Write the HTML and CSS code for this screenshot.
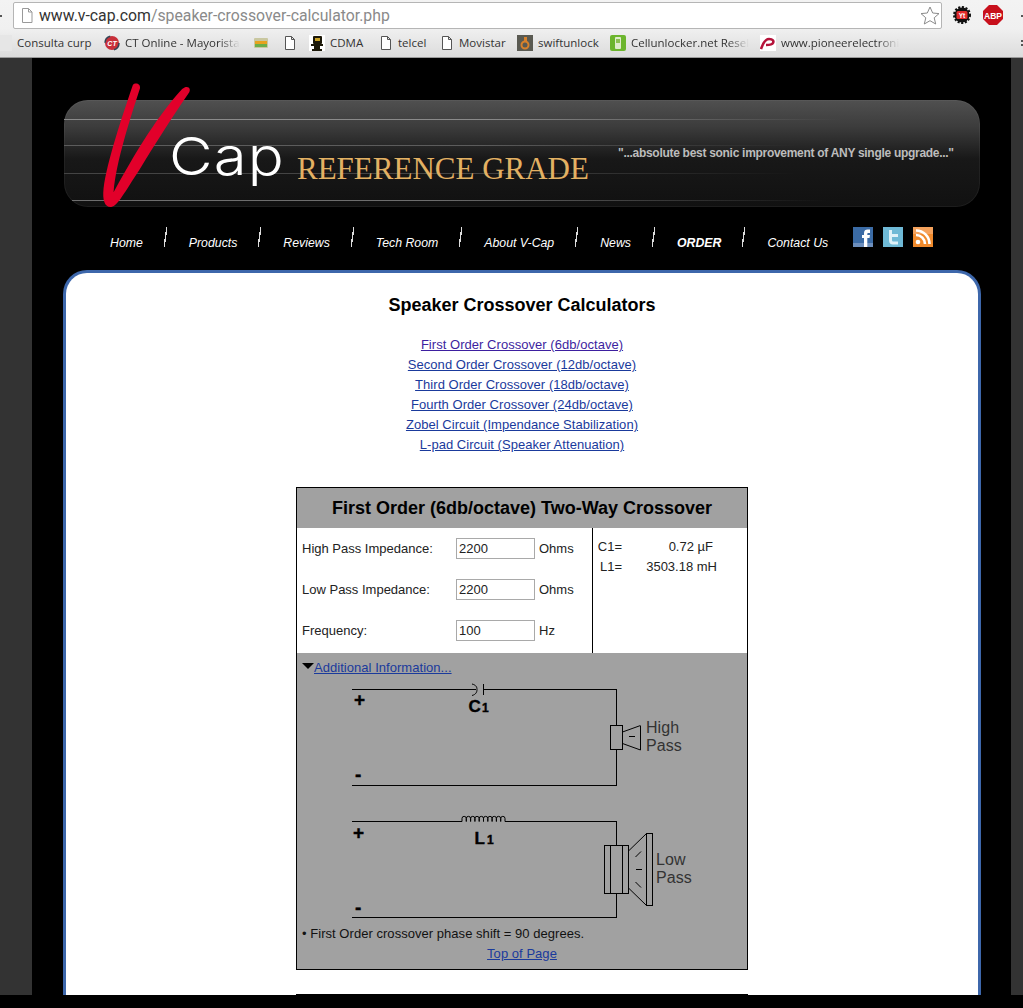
FILE: index.html
```html
<!DOCTYPE html>
<html lang="en">
<head>
<meta charset="utf-8">
<title>Speaker Crossover Calculators</title>
<link rel="stylesheet" href="styles.css">
</head>
<body>
<div class="chrome">
  <i class="dot d1"></i><i class="dot d2"></i><i class="dot d3"></i><i class="dot d4"></i>
  <div class="addr-row">
    <div class="omnibox">
      <svg class="page-ic" width="12" height="15" viewBox="0 0 12 15"><path d="M1.500.5h6l3.500 3.500v10.500h-9.500z M7.500.5v3.500h3.500" fill="#fff" stroke="#999"/></svg>
      <span class="url"><span class="host">www.v-cap.com</span>/speaker-crossover-calculator.php</span>
      <svg class="star" width="20" height="19" viewBox="0 0 20 19"><path d="M10 1l2.700 6 6.300.6-4.800 4.200 1.500 6.200-5.700-3.300-5.700 3.300 1.500-6.200L1 7.600l6.300-.6z" fill="#fff" stroke="#8a8a8a"/></svg>
    </div>
    <div class="ext-icons">
      <svg width="20" height="20" viewBox="0 0 20 20"><circle cx="10" cy="10" r="7.500" fill="#111" stroke="#111" stroke-width="3" stroke-dasharray="2 1.500"/><rect x="4.500" y="6" width="11" height="8" rx="1.500" fill="#e02b2b"/><text x="10" y="12.500" class="yt">Yt</text></svg>
      <svg width="20" height="20" viewBox="0 0 20 20"><path d="M6 0h8l6 6v8l-6 6H6l-6-6V6z" fill="#c8101c"/><text x="10" y="13.500" class="abp">ABP</text></svg>
    </div>
  </div>
  <div class="bm-row">
    <span class="bm b1"><i class="fav"></i>Consulta curp</span>
    <span class="bm b2"><svg width="16" height="16" viewBox="0 0 16 16"><circle cx="8" cy="8" r="7" fill="#c8303a"/><circle cx="8" cy="8" r="7" fill="none" stroke="#345" stroke-width="1.500" stroke-dasharray="9 13"/><text x="8" y="11" class="ct">CT</text></svg><span class="fade">CT Online - Mayorista</span></span>
    <span class="bm b3"><svg width="16" height="14" viewBox="0 0 16 14"><rect x="1" y="2" width="14" height="10" rx="1" fill="#c9c7a0"/><rect x="2" y="5" width="12" height="3" fill="#e8a21e"/><rect x="2" y="8" width="12" height="3" fill="#6cae4a"/></svg></span>
    <span class="bm b4"><svg class="doc" width="12" height="14" viewBox="0 0 12 14"><path d="M1.500.5h6l3 3v10h-9z M7.500.5v3h3" fill="#fff" stroke="#555"/></svg></span>
    <span class="bm b5"><svg width="16" height="16" viewBox="0 0 16 16"><rect width="16" height="16" fill="#fff"/><rect x="4" y="1" width="9" height="8" rx="1" fill="#1c1808"/><rect x="6" y="3" width="5" height="3" fill="#c9a227"/><path d="M2 9h12v2H2zM5 11h6v3h2v2H3v-2h2z" fill="#1c1808"/></svg>CDMA</span>
    <span class="bm b6"><svg class="doc" width="12" height="14" viewBox="0 0 12 14"><path d="M1.500.5h6l3 3v10h-9z M7.500.5v3h3" fill="#fff" stroke="#555"/></svg>telcel</span>
    <span class="bm b7"><svg class="doc" width="12" height="14" viewBox="0 0 12 14"><path d="M1.500.5h6l3 3v10h-9z M7.500.5v3h3" fill="#fff" stroke="#555"/></svg>Movistar</span>
    <span class="bm b8"><svg width="16" height="16" viewBox="0 0 16 16"><rect width="16" height="16" fill="#5a5a52"/><circle cx="8" cy="10" r="3.500" fill="none" stroke="#d9822b" stroke-width="2"/><rect x="7" y="2" width="3" height="5" fill="#d9822b"/></svg>swiftunlock</span>
    <span class="bm b9"><svg width="16" height="16" viewBox="0 0 16 16"><rect width="16" height="16" rx="2" fill="#6cb52d"/><rect x="5" y="2" width="6" height="12" rx="1" fill="#dfeccb"/><rect x="6" y="4" width="4" height="4" fill="#8cc152"/></svg><span class="fade">Cellunlocker.net Resel</span></span>
    <span class="bm"><svg width="16" height="16" viewBox="0 0 16 16"><rect width="16" height="16" fill="#fff"/><path d="M1 14C3 8 5 4 9 4c4 0 5 2 4 4-1 2-4 2-7 2" fill="none" stroke="#b5123a" stroke-width="2.600"/></svg><span class="fade">www.pioneerelectroni</span></span>
  </div>
</div>
<div class="page">
  <div class="gutter-l"></div>
  <main class="wrap">
    <header class="banner">
      <div class="banner-bar">
        <span class="line l1"></span><span class="line l2"></span><span class="line l3"></span><span class="line l4"></span>
        <svg class="v-mark" width="95" height="128" viewBox="140 18 266 384" preserveAspectRatio="none"><path d="M232 30C200 130 160 260 150 340C146 380 155 398 172 396C190 392 210 350 250 285C290 215 340 130 388 55C398 40 385 28 370 42C320 100 260 190 178 352C185 260 225 130 252 40C254 25 238 22 232 30Z" fill="#e2002a"/></svg>
        <span class="cap">Cap</span>
        <span class="grade">REFERENCE GRADE</span>
        <span class="quote">"...absolute best sonic improvement of ANY single upgrade..."</span>
      </div>
    </header>
    <nav class="nav">
      <a class="nav-i">Home</a><i class="sep"></i>
      <a class="nav-i">Products</a><i class="sep"></i>
      <a class="nav-i">Reviews</a><i class="sep"></i>
      <a class="nav-i">Tech Room</a><i class="sep"></i>
      <a class="nav-i">About V-Cap</a><i class="sep"></i>
      <a class="nav-i">News</a><i class="sep"></i>
      <a class="nav-i nav-b">ORDER</a><i class="sep"></i>
      <a class="nav-i">Contact Us</a>
      <span class="social">
        <svg width="20" height="20" viewBox="0 0 20 20"><rect width="20" height="20" fill="#3b6ba5"/><rect y="16" width="20" height="4" fill="#6d8fbd"/><path d="M11 20v-9H9V8h2V6c0-2.500 1.500-3.500 3.500-3.500H17V6h-1.500c-1 0-1.200.5-1.200 1.200V8H17l-.5 3h-2.200v9z" fill="#fff"/></svg>
        <svg width="20" height="20" viewBox="0 0 20 20"><rect width="20" height="20" fill="#6fb9d6"/><path d="M6 3h3v4h6v3H9v3c0 1 .6 1.500 1.600 1.500H15v3h-5c-2.500 0-4-1.500-4-4z" fill="#dff1f8"/></svg>
        <svg width="20" height="20" viewBox="0 0 20 20"><rect width="20" height="20" fill="#f08a2c"/><rect width="20" height="7" fill="#f5a25c"/><circle cx="5" cy="15" r="2.300" fill="#fff"/><path d="M3 8a9 9 0 0 1 9 9M3 3.500a13.500 13.500 0 0 1 13.500 13.500" fill="none" stroke="#fff" stroke-width="2.600"/></svg>
      </span>
    </nav>
    <section class="card">
      <h1 class="title">Speaker Crossover Calculators</h1>
      <ul class="links">
        <li><a class="lnk visited" href="#a">First Order Crossover (6db/octave)</a></li>
        <li><a class="lnk" href="#b">Second Order Crossover (12db/octave)</a></li>
        <li><a class="lnk" href="#c">Third Order Crossover (18db/octave)</a></li>
        <li><a class="lnk" href="#d">Fourth Order Crossover (24db/octave)</a></li>
        <li><a class="lnk" href="#e">Zobel Circuit (Impendance Stabilization)</a></li>
        <li><a class="lnk" href="#f">L-pad Circuit (Speaker Attenuation)</a></li>
      </ul>
      <div class="calc">
        <h2 class="calc-h">First Order (6db/octave) Two-Way Crossover</h2>
        <div class="calc-body">
          <div class="inputs">
            <label class="f-row"><span class="f-lab">High Pass Impedance:</span><input class="f-in" value="2200"><span>Ohms</span></label>
            <label class="f-row"><span class="f-lab">Low Pass Impedance:</span><input class="f-in" value="2200"><span>Ohms</span></label>
            <label class="f-row"><span class="f-lab">Frequency:</span><input class="f-in" value="100"><span>Hz</span></label>
          </div>
          <div class="results">
            <div class="r-row"><span class="r-k">C1=</span><span class="r-v r-v-c">0.72 µF</span></div>
            <div class="r-row"><span class="r-k">L1=</span><span class="r-v">3503.18 mH</span></div>
          </div>
        </div>
        <div class="info">
          <div class="more"><i class="tri"></i><a class="lnk" href="#i">Additional Information...</a></div>
          <svg class="schem" width="400" height="252" viewBox="0 0 400 252">
            <g fill="none" stroke="#000" stroke-width="1" shape-rendering="crispEdges">
              <path d="M12 19.500H136M143 19.500H276.500V55M276.500 79V115.500H12"/>
              <path d="M143.500 14v11"/>
              <path d="M270.500 55.500h12v24h-12z"/>
              <path d="M300.500 55.500v24"/>
              <path d="M12 151.500H122M165 151.500H276.500V175M276.500 224V247.500H12"/>
              <path d="M264.500 175.500h24v48h-24zM270.500 175.500v48M282.500 175.500v48"/>
              <path d="M306.500 163.500h6v72h-6z"/>
              <path d="M295.500 199.500h6M288.500 66.500h6"/>
            </g>
            <g fill="none" stroke="#000" stroke-width="1">
              <path d="M132 14c4 1 5 3 5 5.500s-1 5-5 6"/>
              <path d="M122 151.500v-3a2.150 2.150 0 0 1 4.300 0v3-3a2.150 2.150 0 0 1 4.300 0v3-3a2.150 2.150 0 0 1 4.300 0v3-3a2.150 2.150 0 0 1 4.300 0v3-3a2.150 2.150 0 0 1 4.300 0v3-3a2.150 2.150 0 0 1 4.300 0v3-3a2.150 2.150 0 0 1 4.300 0v3-3a2.150 2.150 0 0 1 4.300 0v3-3a2.150 2.150 0 0 1 4.300 0v3-3a2.150 2.150 0 0 1 4.300 0v3"/>
              <path d="M282.500 62l18-6.500M282.500 73.500l18 6.500"/>
              <path d="M288.500 181l18-17.500M288.500 218l18 17.500"/>
              <path d="M295.500 187l5.500-5.500M295.500 212l5.500 5.500"/>
            </g>
            <text x="14" y="36" class="s-bold s-pm">+</text>
            <text x="15" y="111" class="s-bold s-pm">-</text>
            <text x="13" y="169" class="s-bold s-pm">+</text>
            <text x="15" y="244" class="s-bold s-pm">-</text>
            <text x="128.500" y="42" class="s-bold s-lbl">C</text><text x="142" y="42" class="s-bold s-sub">1</text>
            <text x="134.500" y="174" class="s-bold s-lbl">L</text><text x="147" y="174" class="s-bold s-sub">1</text>
            <text x="306" y="63" class="s-txt">High</text>
            <text x="306" y="81" class="s-txt">Pass</text>
            <text x="316" y="195" class="s-txt">Low</text>
            <text x="316" y="213" class="s-txt">Pass</text>
          </svg>
          <p class="note">• First Order crossover phase shift = 90 degrees.</p>
          <p class="top"><a class="lnk" href="#top">Top of Page</a></p>
        </div>
      </div>
      <div class="calc-next"></div>
    </section>
  </main>
  <div class="gutter-r"></div>
</div>
<div class="bottom"></div>
</body>
</html>
```
FILE: styles.css
```css
* { box-sizing: border-box; }
html, body { margin: 0; padding: 0; height: 1008px; overflow: hidden; background: #000; }
body { font-family: "Liberation Sans", Arial, sans-serif; }

.chrome { position: relative; height: 58px; background: linear-gradient(#f3f3f3, #f0f0f0 50%, #dcdcdc); border-bottom: 1px solid #9a9a9a; overflow: hidden; font-family: "Open Sans", "Noto Sans", sans-serif; }
.dot { position: absolute; width: 2px; height: 2px; background: #555; }
.d1 { left: 0; top: 15px; }
.d2 { left: 1021px; top: 15px; }
.d3 { left: 1021px; top: 40px; }
.d4 { left: 1021px; top: 44px; }
.addr-row { height: 31px; display: flex; align-items: flex-start; padding: 2px 0 0 13px; }
.omnibox { width: 929px; height: 27px; background: #fff; border: 1px solid #b5b5b5; border-radius: 2px; display: flex; align-items: center; padding: 0 1px 0 7px; }
.page-ic { flex: none; }
.url { margin-left: 6px; font-family: "Roboto", "Open Sans", sans-serif; font-size: 15.800px; color: #8a8a8a; white-space: nowrap; flex: 1; }
.host { color: #333; }
.ext-icons { display: flex; gap: 11px; margin-left: 10px; margin-top: 3px; }
.yt { font: bold 6.500px "Liberation Sans", sans-serif; fill: #fff; text-anchor: middle; }
.abp { font: bold 8.500px "Liberation Sans", sans-serif; fill: #fff; text-anchor: middle; }
.ct { font: italic bold 7px "Liberation Sans", sans-serif; fill: #fff; text-anchor: middle; }

.bm-row { height: 26px; display: flex; align-items: center; font-size: 11.500px; color: #333; white-space: nowrap; padding-bottom: 3px; }
.bm { display: inline-flex; align-items: center; gap: 5px; flex: none; }
.b1 { width: 104px; }
.b2 { width: 149px; }
.b3 { width: 31px; }
.b4 { width: 25px; }
.b5 { width: 71px; }
.b6 { width: 61px; }
.b7 { width: 76px; }
.b8 { width: 93px; }
.b9 { width: 150px; }
.doc { margin-right: 1px; }
.fav { display: inline-block; width: 12px; height: 16px; background: #e6e6e6; flex: none; }
.fade { display: inline-block; -webkit-mask-image: linear-gradient(90deg, #000 82%, transparent); mask-image: linear-gradient(90deg, #000 82%, transparent); }

.page { height: 937px; display: flex; }
.gutter-l { width: 32px; flex: none; background: #333; }
.gutter-r { width: 12px; flex: none; background: #333; }
.wrap { width: 979px; flex: none; background: #000; }

.banner { height: 167px; padding: 42px 0 0 32px; }
.banner-bar { position: relative; width: 916px; height: 107px; border-radius: 24px; background: linear-gradient(#505050 0, #3c3c3c 25%, #181818 55%, #111 100%); box-shadow: inset 0 0 0 1px rgba(255,255,255,.05); }
.line { position: absolute; left: 0; height: 1px; }
.l1 { top: 19px; width: 100%; background: linear-gradient(90deg, #8a8a8a 45%, transparent 85%); }
.l2 { top: 45px; width: 100%; background: linear-gradient(90deg, #5c5c5c 45%, transparent 80%); }
.l3 { top: 73px; width: 100%; background: linear-gradient(90deg, #444 45%, transparent 80%); }
.l4 { top: 100px; left: 8px; width: 97%; background: linear-gradient(90deg, #6e6e6e 40%, transparent 85%); }
.v-mark { position: absolute; left: 36px; top: -19px; }
.cap { position: absolute; left: 105px; top: 27px; font-family: "Inter", "Lato", sans-serif; font-weight: 300; font-size: 52px; line-height: 60px; letter-spacing: 1px; color: #fff; transform: scaleX(1.15); transform-origin: left center; }
.grade { position: absolute; left: 233px; top: 51px; font-family: "Liberation Serif", serif; font-size: 31px; line-height: 36px; color: #e3b163; white-space: nowrap; }
.quote { position: absolute; left: 554px; top: 46px; font-weight: bold; font-size: 12px; letter-spacing: -.29px; line-height: 15px; color: #bcbcbc; white-space: nowrap; }

.nav { height: 45px; display: flex; align-items: flex-start; padding: 0 0 0 78px; color: #fff; font-style: italic; font-size: 12.300px; }
.nav-i { margin-top: 11px; line-height: 15px; color: #fff; }
.nav-b { font-weight: bold; }
.sep { width: 3px; height: 20px; margin: 2px 22px 0 21px; background: linear-gradient(to top left, transparent 38%, #ddd 38%, #ddd 62%, transparent 62%); }
.social { display: flex; gap: 10px; margin-left: 25px; margin-top: 2px; }
.social svg { display: block; }

.card { width: 918px; height: 760px; margin-left: 31px; padding-top: 1px; background: #fff; border: 3px solid #3d67ab; border-bottom: 0; border-radius: 24px 24px 0 0; display: flex; flex-direction: column; align-items: center; }
.title { margin: 21px 0 0; font-size: 18px; line-height: 21px; font-weight: bold; color: #000; }
.links { list-style: none; margin: 19px 0 0; padding: 0; text-align: center; font-size: 13px; letter-spacing: .04px; line-height: 20px; }
.lnk { color: #1a3a9c; text-decoration: underline; }
.visited { color: #3d1fa0; }

.calc { width: 452px; height: 483px; margin-top: 32px; border: 1px solid #000; background: #a1a1a1; flex: none; }
.calc-h { height: 40px; margin: 0; text-align: center; font-size: 18px; line-height: 41px; font-weight: bold; color: #000; }
.calc-body { height: 125px; display: flex; background: #fff; }
.inputs { width: 296px; border-right: 1px solid #000; padding: 0 5px; font-size: 13px; color: #222; }
.f-row { height: 41px; display: flex; align-items: center; }
.f-lab { width: 154px; }
.f-in { width: 79px; height: 21px; margin-right: 4px; padding: 0 2px; border: 1px solid #a9a9a9; font: 13px "Liberation Sans", sans-serif; color: #222; }
.results { flex: 1; padding: 9px 0 0 4px; font-size: 13px; line-height: 20px; color: #222; }
.r-row { display: flex; }
.r-k { width: 25px; text-align: right; white-space: nowrap; }
.r-v { width: 95px; text-align: right; }
.r-v-c { padding-right: 4px; }

.info { font-size: 13px; letter-spacing: .04px; color: #111; }
.more { height: 27px; padding: 7px 0 0 5px; line-height: 15px; display: flex; align-items: flex-start; }
.tri { width: 0; height: 0; margin-top: 3px; border: 6px solid transparent; border-top: 6px solid #000; border-bottom: 0; }
.schem { display: block; margin: -10px 0 0 43px; height: 252px; }
.s-bold { font-family: "Liberation Sans", sans-serif; font-weight: bold; fill: #000; stroke: #000; stroke-width: .4px; }
.s-pm { font-size: 19px; }
.s-lbl { font-size: 17px; }
.s-sub { font-size: 12px; }
.s-txt { font-family: "Liberation Sans", sans-serif; font-size: 16px; fill: #333; }
.note { margin: 4px 0 0 5px; line-height: 16px; }
.top { margin: 4px 0 0; line-height: 16px; text-align: center; }

.calc-next { width: 452px; height: 20px; margin-top: 24px; background: #000; flex: none; }
.bottom { position: absolute; left: 0; top: 995px; width: 1023px; height: 13px; background: #000; }
```
